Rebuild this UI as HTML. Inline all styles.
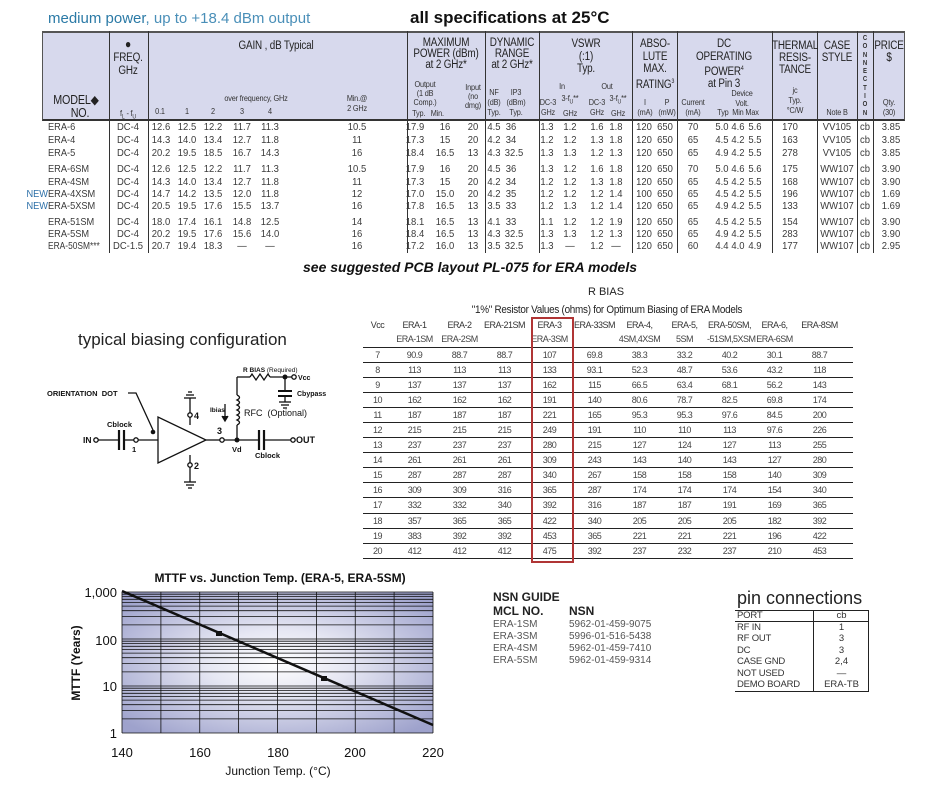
<!DOCTYPE html>
<html><head><meta charset="utf-8">
<style>
*{margin:0;padding:0;box-sizing:border-box}
body{width:928px;height:785px;background:#fff;position:relative;overflow:hidden;font-family:"Liberation Sans",sans-serif;color:#222}
.a{position:absolute;white-space:nowrap}
.c{position:absolute;white-space:nowrap;transform:translateX(-50%) scaleX(0.86);text-align:center}
.h{font-size:11.5px;line-height:12.5px;color:#222;letter-spacing:-0.2px}
.s{font-size:8.5px;line-height:10px;color:#333;letter-spacing:-0.2px}
.row{position:absolute;left:0;width:928px;height:13px;font-size:10.5px;color:#3a3a3a}
.row span{position:absolute;transform:translateX(-50%) scaleX(0.9);white-space:nowrap}
.row span.m{transform:scaleX(0.88);transform-origin:0 0;left:48px}
.vl{position:absolute;width:1px;background:#333}
table.rb{position:absolute;left:363px;top:318px;width:490px;border-collapse:collapse;table-layout:fixed;font-size:9px;color:#444;letter-spacing:-0.5px}
table.rb td{text-align:center;height:15.1px;padding:0;border-bottom:1px solid #222;white-space:nowrap;overflow:visible}
table.rb tr.hd td{border:none;height:14px;color:#333}
table.rb tr.hd2 td{border-bottom:1px solid #222;height:15px}
</style></head><body>

<div class="a" style="left:48px;top:10px;font-size:15px;color:#2b7aa6">medium power<span style="color:#4a8fb8">, up to +18.4 dBm output</span></div>
<div class="a" style="left:410px;top:8px;font-size:17px;font-weight:bold;color:#111">all specifications at 25°C</div>

<div class="a" style="left:42px;top:31px;width:863px;height:90px;background:#d7d9ed;border-top:2px solid #555;border-bottom:2px solid #333;border-left:1px solid #555;border-right:1px solid #555"></div>
<div class="vl" style="left:109px;top:31px;height:222px"></div>
<div class="vl" style="left:148px;top:31px;height:222px"></div>
<div class="vl" style="left:407px;top:31px;height:222px"></div>
<div class="vl" style="left:485px;top:31px;height:222px"></div>
<div class="vl" style="left:539px;top:31px;height:222px"></div>
<div class="vl" style="left:632px;top:31px;height:222px"></div>
<div class="vl" style="left:677px;top:31px;height:222px"></div>
<div class="vl" style="left:772px;top:31px;height:222px"></div>
<div class="vl" style="left:817px;top:31px;height:222px"></div>
<div class="vl" style="left:857px;top:31px;height:222px"></div>
<div class="vl" style="left:873px;top:31px;height:222px"></div>

<div class="c h" style="left:76px;top:94px;font-size:12.5px">MODEL◆</div>
<div class="c h" style="left:80px;top:107px;font-size:12.5px">NO.</div>
<div class="c h" style="left:128px;top:38px;font-size:12px">●</div>
<div class="c h" style="left:128px;top:52px">FREQ.<br>GHz</div>
<div class="c s" style="left:128px;top:108px">f<sub style="font-size:6px">L</sub> - f<sub style="font-size:6px">U</sub></div>
<div class="c h" style="left:276px;top:40px">GAIN , dB Typical</div>
<div class="c s" style="left:256px;top:93px">over frequency, GHz</div>
<div class="c s" style="left:160px;top:106px">0.1</div>
<div class="c s" style="left:187px;top:106px">1</div>
<div class="c s" style="left:213px;top:106px">2</div>
<div class="c s" style="left:242px;top:106px">3</div>
<div class="c s" style="left:270px;top:106px">4</div>
<div class="c s" style="left:357px;top:93px">Min.@<br>2 GHz</div>
<div class="c h" style="left:446px;top:38px;line-height:11px">MAXIMUM<br>POWER (dBm)<br>at 2 GHz*</div>
<div class="c s" style="left:425px;top:80px;line-height:9px">Output<br>(1 dB<br>Comp.)</div>
<div class="c s" style="left:473px;top:83px;line-height:9px">Input<br>(no<br>dmg)</div>
<div class="c s" style="left:428px;top:108px">Typ.&nbsp;&nbsp; Min.</div>
<div class="c h" style="left:512px;top:38px;line-height:11px">DYNAMIC<br>RANGE<br>at 2 GHz*</div>
<div class="c s" style="left:494px;top:87px">NF<br>(dB)<br>Typ.</div>
<div class="c s" style="left:516px;top:87px">IP3<br>(dBm)<br>Typ.</div>
<div class="c h" style="left:586px;top:38px">VSWR<br>(:1)<br>Typ.</div>
<div class="c s" style="left:562px;top:81px">In</div>
<div class="c s" style="left:607px;top:81px">Out</div>
<div class="c s" style="left:548px;top:97px">DC-3<br>GHz</div>
<div class="c s" style="left:570px;top:93px">3-f<sub style="font-size:6px">U</sub>**<br>GHz</div>
<div class="c s" style="left:597px;top:97px">DC-3<br>GHz</div>
<div class="c s" style="left:618px;top:93px">3-f<sub style="font-size:6px">U</sub>**<br>GHz</div>
<div class="c h" style="left:655px;top:38px">ABSO-<br>LUTE<br>MAX.<br>RATING<sup style="font-size:6px">3</sup></div>
<div class="c s" style="left:645px;top:97px">I<br>(mA)</div>
<div class="c s" style="left:667px;top:97px">P<br>(mW)</div>
<div class="c h" style="left:724px;top:38px">DC<br>OPERATING<br>POWER<sup style="font-size:6px">4</sup><br>at Pin 3</div>
<div class="c s" style="left:693px;top:97px">Current<br>(mA)</div>
<div class="c s" style="left:742px;top:88px">Device<br>Volt.</div>
<div class="c s" style="left:738px;top:107px">Typ&nbsp; Min Max</div>
<div class="c h" style="left:795px;top:40px;line-height:12px">THERMAL<br>RESIS-<br>TANCE</div>
<div class="c s" style="left:795px;top:85px">jc<br>Typ.<br>°C/W</div>
<div class="c h" style="left:837px;top:40px;line-height:12px">CASE<br>STYLE</div>
<div class="c s" style="left:837px;top:107px">Note B</div>
<div class="c" style="left:865px;top:35px;font-size:7px;line-height:8.3px;font-weight:bold;color:#333">C<br>O<br>N<br>N<br>E<br>C<br>T<br>I<br>O<br>N</div>
<div class="c h" style="left:889px;top:40px;line-height:12px">PRICE<br>$</div>
<div class="c s" style="left:889px;top:97px">Qty.<br>(30)</div>

<div class="row" style="top:121px"><span class="m">ERA-6</span><span style="left:128px">DC-4</span><span style="left:161px">12.6</span><span style="left:187px">12.5</span><span style="left:213px">12.2</span><span style="left:242px">11.7</span><span style="left:270px">11.3</span><span style="left:357px">10.5</span><span style="left:415px">17.9</span><span style="left:445px">16</span><span style="left:473px">20</span><span style="left:494px">4.5</span><span style="left:511px">36</span><span style="left:547px">1.3</span><span style="left:570px">1.2</span><span style="left:597px">1.6</span><span style="left:616px">1.8</span><span style="left:644px">120</span><span style="left:665px">650</span><span style="left:693px">70</span><span style="left:722px">5.0</span><span style="left:738px">4.6</span><span style="left:755px">5.6</span><span style="left:790px">170</span><span style="left:837px">VV105</span><span style="left:865px">cb</span><span style="left:891px">3.85</span></div>
<div class="row" style="top:134px"><span class="m">ERA-4</span><span style="left:128px">DC-4</span><span style="left:161px">14.3</span><span style="left:187px">14.0</span><span style="left:213px">13.4</span><span style="left:242px">12.7</span><span style="left:270px">11.8</span><span style="left:357px">11</span><span style="left:415px">17.3</span><span style="left:445px">15</span><span style="left:473px">20</span><span style="left:494px">4.2</span><span style="left:511px">34</span><span style="left:547px">1.2</span><span style="left:570px">1.2</span><span style="left:597px">1.3</span><span style="left:616px">1.8</span><span style="left:644px">120</span><span style="left:665px">650</span><span style="left:693px">65</span><span style="left:722px">4.5</span><span style="left:738px">4.2</span><span style="left:755px">5.5</span><span style="left:790px">163</span><span style="left:837px">VV105</span><span style="left:865px">cb</span><span style="left:891px">3.85</span></div>
<div class="row" style="top:147px"><span class="m">ERA-5</span><span style="left:128px">DC-4</span><span style="left:161px">20.2</span><span style="left:187px">19.5</span><span style="left:213px">18.5</span><span style="left:242px">16.7</span><span style="left:270px">14.3</span><span style="left:357px">16</span><span style="left:415px">18.4</span><span style="left:445px">16.5</span><span style="left:473px">13</span><span style="left:494px">4.3</span><span style="left:514px">32.5</span><span style="left:547px">1.3</span><span style="left:570px">1.3</span><span style="left:597px">1.2</span><span style="left:616px">1.3</span><span style="left:644px">120</span><span style="left:665px">650</span><span style="left:693px">65</span><span style="left:722px">4.9</span><span style="left:738px">4.2</span><span style="left:755px">5.5</span><span style="left:790px">278</span><span style="left:837px">VV105</span><span style="left:865px">cb</span><span style="left:891px">3.85</span></div>
<div class="row" style="top:163px"><span class="m">ERA-6SM</span><span style="left:128px">DC-4</span><span style="left:161px">12.6</span><span style="left:187px">12.5</span><span style="left:213px">12.2</span><span style="left:242px">11.7</span><span style="left:270px">11.3</span><span style="left:357px">10.5</span><span style="left:415px">17.9</span><span style="left:445px">16</span><span style="left:473px">20</span><span style="left:494px">4.5</span><span style="left:511px">36</span><span style="left:547px">1.3</span><span style="left:570px">1.2</span><span style="left:597px">1.6</span><span style="left:616px">1.8</span><span style="left:644px">120</span><span style="left:665px">650</span><span style="left:693px">70</span><span style="left:722px">5.0</span><span style="left:738px">4.6</span><span style="left:755px">5.6</span><span style="left:790px">175</span><span style="left:837px">WW107</span><span style="left:865px">cb</span><span style="left:891px">3.90</span></div>
<div class="row" style="top:176px"><span class="m">ERA-4SM</span><span style="left:128px">DC-4</span><span style="left:161px">14.3</span><span style="left:187px">14.0</span><span style="left:213px">13.4</span><span style="left:242px">12.7</span><span style="left:270px">11.8</span><span style="left:357px">11</span><span style="left:415px">17.3</span><span style="left:445px">15</span><span style="left:473px">20</span><span style="left:494px">4.2</span><span style="left:511px">34</span><span style="left:547px">1.2</span><span style="left:570px">1.2</span><span style="left:597px">1.3</span><span style="left:616px">1.8</span><span style="left:644px">120</span><span style="left:665px">650</span><span style="left:693px">65</span><span style="left:722px">4.5</span><span style="left:738px">4.2</span><span style="left:755px">5.5</span><span style="left:790px">168</span><span style="left:837px">WW107</span><span style="left:865px">cb</span><span style="left:891px">3.90</span></div>
<div class="row" style="top:188px"><span class="m"><b style="position:absolute;right:100%;font-weight:normal;color:#2b6fa8">NEW</b>ERA-4XSM</span><span style="left:128px">DC-4</span><span style="left:161px">14.7</span><span style="left:187px">14.2</span><span style="left:213px">13.5</span><span style="left:242px">12.0</span><span style="left:270px">11.8</span><span style="left:357px">12</span><span style="left:415px">17.0</span><span style="left:445px">15.0</span><span style="left:473px">20</span><span style="left:494px">4.2</span><span style="left:511px">35</span><span style="left:547px">1.2</span><span style="left:570px">1.2</span><span style="left:597px">1.2</span><span style="left:616px">1.4</span><span style="left:644px">100</span><span style="left:665px">650</span><span style="left:693px">65</span><span style="left:722px">4.5</span><span style="left:738px">4.2</span><span style="left:755px">5.5</span><span style="left:790px">196</span><span style="left:837px">WW107</span><span style="left:865px">cb</span><span style="left:891px">1.69</span></div>
<div class="row" style="top:200px"><span class="m"><b style="position:absolute;right:100%;font-weight:normal;color:#2b6fa8">NEW</b>ERA-5XSM</span><span style="left:128px">DC-4</span><span style="left:161px">20.5</span><span style="left:187px">19.5</span><span style="left:213px">17.6</span><span style="left:242px">15.5</span><span style="left:270px">13.7</span><span style="left:357px">16</span><span style="left:415px">17.8</span><span style="left:445px">16.5</span><span style="left:473px">13</span><span style="left:494px">3.5</span><span style="left:511px">33</span><span style="left:547px">1.2</span><span style="left:570px">1.3</span><span style="left:597px">1.2</span><span style="left:616px">1.4</span><span style="left:644px">120</span><span style="left:665px">650</span><span style="left:693px">65</span><span style="left:722px">4.9</span><span style="left:738px">4.2</span><span style="left:755px">5.5</span><span style="left:790px">133</span><span style="left:837px">WW107</span><span style="left:865px">cb</span><span style="left:891px">1.69</span></div>
<div class="row" style="top:216px"><span class="m">ERA-51SM</span><span style="left:128px">DC-4</span><span style="left:161px">18.0</span><span style="left:187px">17.4</span><span style="left:213px">16.1</span><span style="left:242px">14.8</span><span style="left:270px">12.5</span><span style="left:357px">14</span><span style="left:415px">18.1</span><span style="left:445px">16.5</span><span style="left:473px">13</span><span style="left:494px">4.1</span><span style="left:511px">33</span><span style="left:547px">1.1</span><span style="left:570px">1.2</span><span style="left:597px">1.2</span><span style="left:616px">1.9</span><span style="left:644px">120</span><span style="left:665px">650</span><span style="left:693px">65</span><span style="left:722px">4.5</span><span style="left:738px">4.2</span><span style="left:755px">5.5</span><span style="left:790px">154</span><span style="left:837px">WW107</span><span style="left:865px">cb</span><span style="left:891px">3.90</span></div>
<div class="row" style="top:228px"><span class="m">ERA-5SM</span><span style="left:128px">DC-4</span><span style="left:161px">20.2</span><span style="left:187px">19.5</span><span style="left:213px">17.6</span><span style="left:242px">15.6</span><span style="left:270px">14.0</span><span style="left:357px">16</span><span style="left:415px">18.4</span><span style="left:445px">16.5</span><span style="left:473px">13</span><span style="left:494px">4.3</span><span style="left:514px">32.5</span><span style="left:547px">1.3</span><span style="left:570px">1.3</span><span style="left:597px">1.2</span><span style="left:616px">1.3</span><span style="left:644px">120</span><span style="left:665px">650</span><span style="left:693px">65</span><span style="left:722px">4.9</span><span style="left:738px">4.2</span><span style="left:755px">5.5</span><span style="left:790px">283</span><span style="left:837px">WW107</span><span style="left:865px">cb</span><span style="left:891px">3.90</span></div>
<div class="row" style="top:240px"><span class="m" style="transform:scaleX(0.8)">ERA-50SM***</span><span style="left:128px">DC-1.5</span><span style="left:161px">20.7</span><span style="left:187px">19.4</span><span style="left:213px">18.3</span><span style="left:242px">—</span><span style="left:270px">—</span><span style="left:357px">16</span><span style="left:415px">17.2</span><span style="left:445px">16.0</span><span style="left:473px">13</span><span style="left:494px">3.5</span><span style="left:514px">32.5</span><span style="left:547px">1.3</span><span style="left:570px">—</span><span style="left:597px">1.2</span><span style="left:616px">—</span><span style="left:644px">120</span><span style="left:665px">650</span><span style="left:693px">60</span><span style="left:722px">4.4</span><span style="left:738px">4.0</span><span style="left:755px">4.9</span><span style="left:790px">177</span><span style="left:837px">WW107</span><span style="left:865px">cb</span><span style="left:891px">2.95</span></div>

<div class="a" style="left:470px;top:259px;transform:translateX(-50%);font-size:14px;font-weight:bold;font-style:italic;color:#111">see suggested PCB layout PL-075 for ERA models</div>

<div class="a" style="left:606px;top:286px;transform:translateX(-50%);font-size:11px;color:#222">R BIAS</div>
<div class="a" style="left:607px;top:304px;transform:translateX(-50%) scaleX(0.9);font-size:11px;color:#222;letter-spacing:-0.3px">"1%" Resistor Values (ohms) for Optimum Biasing of ERA Models</div>
<table class="rb">
<colgroup><col style="width:29px"><col style="width:45px"><col style="width:45px"><col style="width:45px"><col style="width:45px"><col style="width:45px"><col style="width:45px"><col style="width:45px"><col style="width:45px"><col style="width:45px"><col style="width:45px"><col style="width:11px"></colgroup>
<tr class="hd"><td>Vcc</td><td>ERA-1</td><td>ERA-2</td><td>ERA-21SM</td><td>ERA-3</td><td>ERA-33SM</td><td>ERA-4,</td><td>ERA-5,</td><td>ERA-50SM,</td><td>ERA-6,</td><td>ERA-8SM</td><td></td></tr>
<tr class="hd2"><td></td><td>ERA-1SM</td><td>ERA-2SM</td><td></td><td>ERA-3SM</td><td></td><td>4SM,4XSM</td><td>5SM</td><td>-51SM,5XSM</td><td>ERA-6SM</td><td></td><td></td></tr>
<tr><td>7</td><td>90.9</td><td>88.7</td><td>88.7</td><td>107</td><td>69.8</td><td>38.3</td><td>33.2</td><td>40.2</td><td>30.1</td><td>88.7</td><td></td></tr>
<tr><td>8</td><td>113</td><td>113</td><td>113</td><td>133</td><td>93.1</td><td>52.3</td><td>48.7</td><td>53.6</td><td>43.2</td><td>118</td><td></td></tr>
<tr><td>9</td><td>137</td><td>137</td><td>137</td><td>162</td><td>115</td><td>66.5</td><td>63.4</td><td>68.1</td><td>56.2</td><td>143</td><td></td></tr>
<tr><td>10</td><td>162</td><td>162</td><td>162</td><td>191</td><td>140</td><td>80.6</td><td>78.7</td><td>82.5</td><td>69.8</td><td>174</td><td></td></tr>
<tr><td>11</td><td>187</td><td>187</td><td>187</td><td>221</td><td>165</td><td>95.3</td><td>95.3</td><td>97.6</td><td>84.5</td><td>200</td><td></td></tr>
<tr><td>12</td><td>215</td><td>215</td><td>215</td><td>249</td><td>191</td><td>110</td><td>110</td><td>113</td><td>97.6</td><td>226</td><td></td></tr>
<tr><td>13</td><td>237</td><td>237</td><td>237</td><td>280</td><td>215</td><td>127</td><td>124</td><td>127</td><td>113</td><td>255</td><td></td></tr>
<tr><td>14</td><td>261</td><td>261</td><td>261</td><td>309</td><td>243</td><td>143</td><td>140</td><td>143</td><td>127</td><td>280</td><td></td></tr>
<tr><td>15</td><td>287</td><td>287</td><td>287</td><td>340</td><td>267</td><td>158</td><td>158</td><td>158</td><td>140</td><td>309</td><td></td></tr>
<tr><td>16</td><td>309</td><td>309</td><td>316</td><td>365</td><td>287</td><td>174</td><td>174</td><td>174</td><td>154</td><td>340</td><td></td></tr>
<tr><td>17</td><td>332</td><td>332</td><td>340</td><td>392</td><td>316</td><td>187</td><td>187</td><td>191</td><td>169</td><td>365</td><td></td></tr>
<tr><td>18</td><td>357</td><td>365</td><td>365</td><td>422</td><td>340</td><td>205</td><td>205</td><td>205</td><td>182</td><td>392</td><td></td></tr>
<tr><td>19</td><td>383</td><td>392</td><td>392</td><td>453</td><td>365</td><td>221</td><td>221</td><td>221</td><td>196</td><td>422</td><td></td></tr>
<tr><td>20</td><td>412</td><td>412</td><td>412</td><td>475</td><td>392</td><td>237</td><td>232</td><td>237</td><td>210</td><td>453</td><td></td></tr>
</table>
<div class="a" style="left:531px;top:317px;width:43px;height:246px;border:2.5px solid #b03535"></div>

<div class="a" style="left:78px;top:330px;font-size:17px;color:#222">typical biasing configuration</div>

<svg class="a" style="left:0;top:0" width="928" height="785" viewBox="0 0 928 785">
<defs>
<radialGradient id="g" cx="50%" cy="50%" r="65%">
<stop offset="0" stop-color="#ffffff"/><stop offset="0.35" stop-color="#e6e7f3"/><stop offset="1" stop-color="#9ea2cc"/>
</radialGradient>
</defs>
<g stroke="#111" fill="none" stroke-width="1.3">
<circle cx="96" cy="440" r="2.2"/><line x1="98" y1="440" x2="118" y2="440"/>
<line x1="119" y1="430" x2="119" y2="450" stroke-width="2.2"/><line x1="124" y1="430" x2="124" y2="450" stroke-width="2.2"/>
<line x1="124" y1="440" x2="134" y2="440"/><circle cx="136" cy="440" r="2.2"/>
<line x1="138" y1="440" x2="158" y2="440"/>
<polygon points="158,417 158,463 206,440"/>
<line x1="190" y1="425" x2="190" y2="417"/><circle cx="190" cy="415" r="2.2"/><line x1="190" y1="413" x2="190" y2="398"/>
<line x1="184" y1="398" x2="196" y2="398"/><line x1="186" y1="395" x2="194" y2="395"/><line x1="188" y1="392" x2="192" y2="392"/>
<line x1="190" y1="455" x2="190" y2="463"/><circle cx="190" cy="465" r="2.2"/><line x1="190" y1="467" x2="190" y2="482"/>
<line x1="184" y1="482" x2="196" y2="482"/><line x1="186" y1="485" x2="194" y2="485"/><line x1="188" y1="488" x2="192" y2="488"/>
<line x1="206" y1="440" x2="220" y2="440"/><circle cx="222" cy="440" r="2.2"/><line x1="224" y1="440" x2="259" y2="440"/>
<line x1="259" y1="430" x2="259" y2="450" stroke-width="2.2"/><line x1="264" y1="430" x2="264" y2="450" stroke-width="2.2"/>
<line x1="264" y1="440" x2="291" y2="440"/><circle cx="293" cy="440" r="2.2"/>
<line x1="237" y1="440" x2="237" y2="425"/>
<path d="M237,425 q5,-2.5 0,-5 q5,-2.5 0,-5 q5,-2.5 0,-5 q5,-2.5 0,-5 q5,-2.5 0,-5 q5,-2.5 0,-5"/>
<line x1="237" y1="395" x2="237" y2="377"/><line x1="237" y1="377" x2="250" y2="377"/>
<path d="M250,377 l2,-3 l4,6 l4,-6 l4,6 l4,-6 l2,3"/>
<line x1="270" y1="377" x2="292" y2="377"/><circle cx="294" cy="377" r="2.2"/>
<line x1="285" y1="377" x2="285" y2="391"/><line x1="278" y1="391" x2="292" y2="391" stroke-width="2"/><line x1="278" y1="396" x2="292" y2="396" stroke-width="2"/>
<line x1="285" y1="396" x2="285" y2="402"/><line x1="279" y1="402" x2="291" y2="402"/><line x1="281" y1="405" x2="289" y2="405"/><line x1="283" y1="408" x2="287" y2="408"/>
<line x1="225" y1="404" x2="225" y2="420"/><path d="M222,416 L225,421 L228,416" fill="#111"/>
<path d="M128,393 L136,393 L153,430"/>
</g>
<circle cx="153" cy="432" r="2.3" fill="#111"/><circle cx="237" cy="440" r="2.5" fill="#111"/><circle cx="285" cy="377" r="2.5" fill="#111"/>
<g font-family="Liberation Sans,sans-serif" font-weight="bold" fill="#111" font-size="7.5">
<text x="47" y="396">ORIENTATION&#160; DOT</text>
<text x="107" y="427">Cblock</text>
<text x="83" y="443" font-size="8.5">IN</text>
<text x="132" y="452">1</text>
<text x="194" y="419" font-size="9">4</text>
<text x="194" y="469" font-size="9">2</text>
<text x="217" y="434" font-size="9">3</text>
<text x="232" y="452">Vd</text>
<text x="255" y="458">Cblock</text>
<text x="296" y="443" font-size="9">OUT</text>
<text x="210" y="412" font-size="6.5">Ibias</text>
<text x="244" y="416" font-size="9" font-weight="normal">RFC&#160; (Optional)</text>
<text x="243" y="372" font-size="6.5">R BIAS <tspan font-weight="normal">(Required)</tspan></text>
<text x="298" y="380" font-size="7">Vcc</text>
<text x="297" y="396" font-size="7">Cbypass</text>
</g>

<rect x="122" y="592" width="311" height="141" fill="url(#g)"/>
<g stroke="#111" stroke-width="0.8">
<path d="M122,718.9H433M122,710.6H433M122,704.7H433M122,700.1H433M122,696.4H433M122,693.3H433M122,690.6H433M122,688.2H433M122,686H433
M122,671.9H433M122,663.6H433M122,657.7H433M122,653.1H433M122,649.4H433M122,646.3H433M122,643.6H433M122,641.2H433M122,639H433
M122,624.9H433M122,616.6H433M122,610.7H433M122,606.1H433M122,602.4H433M122,599.3H433M122,596.6H433M122,594.2H433M122,592H433M122,733H433
M122,592V733M160.9,592V733M199.75,592V733M238.6,592V733M277.5,592V733M316.4,592V733M355.25,592V733M394.1,592V733M433,592V733"/>
</g>
<line x1="122" y1="591" x2="433" y2="725" stroke="#111" stroke-width="2.5"/>
<rect x="216" y="631" width="6" height="5" fill="#111"/><rect x="321" y="676" width="6" height="5" fill="#111"/>
<g font-family="Liberation Sans,sans-serif" fill="#111" font-size="13">
<text x="280" y="582" text-anchor="middle" font-weight="bold" font-size="12">MTTF vs. Junction Temp. (ERA-5, ERA-5SM)</text>
<text x="117" y="597" text-anchor="end">1,000</text>
<text x="117" y="645" text-anchor="end">100</text>
<text x="117" y="691" text-anchor="end">10</text>
<text x="117" y="738" text-anchor="end">1</text>
<text x="122" y="757" text-anchor="middle">140</text>
<text x="200" y="757" text-anchor="middle">160</text>
<text x="278" y="757" text-anchor="middle">180</text>
<text x="355" y="757" text-anchor="middle">200</text>
<text x="433" y="757" text-anchor="middle">220</text>
<text x="278" y="775" text-anchor="middle" font-size="12">Junction Temp. (°C)</text>
<text transform="translate(80,663) rotate(-90)" text-anchor="middle" font-size="12" font-weight="bold">MTTF (Years)</text>
</g>
</svg>

<div class="a" style="left:493px;top:590px;font-size:12px;font-weight:bold;color:#222">NSN GUIDE</div>
<div class="a" style="left:493px;top:604px;font-size:12px;font-weight:bold;color:#222">MCL NO.</div>
<div class="a" style="left:569px;top:604px;font-size:12px;font-weight:bold;color:#222">NSN</div>
<div class="a" style="left:493px;top:619px;font-size:10px;line-height:12px;color:#555">ERA-1SM<br>ERA-3SM<br>ERA-4SM<br>ERA-5SM</div>
<div class="a" style="left:569px;top:619px;font-size:10px;line-height:12px;color:#555">5962-01-459-9075<br>5996-01-516-5438<br>5962-01-459-7410<br>5962-01-459-9314</div>

<div class="a" style="left:737px;top:588px;font-size:18px;color:#222">pin connections</div>
<div class="a" style="left:735px;top:610px;width:134px;height:82px;border:1px solid #222;border-left:none"></div>
<div class="a" style="left:735px;top:621px;width:134px;border-top:1px solid #222"></div>
<div class="a" style="left:813px;top:610px;height:82px;border-left:1px solid #222"></div>
<div class="a" style="left:737px;top:610px;font-size:9.5px;line-height:11.5px;color:#333;letter-spacing:-0.2px">PORT<br>RF IN<br>RF OUT<br>DC<br>CASE GND<br>NOT USED<br>DEMO BOARD</div>
<div class="a" style="left:814px;top:610px;width:55px;text-align:center;font-size:9.5px;line-height:11.5px;color:#333">cb<br>1<br>3<br>3<br>2,4<br>—<br>ERA-TB</div>
</body></html>
